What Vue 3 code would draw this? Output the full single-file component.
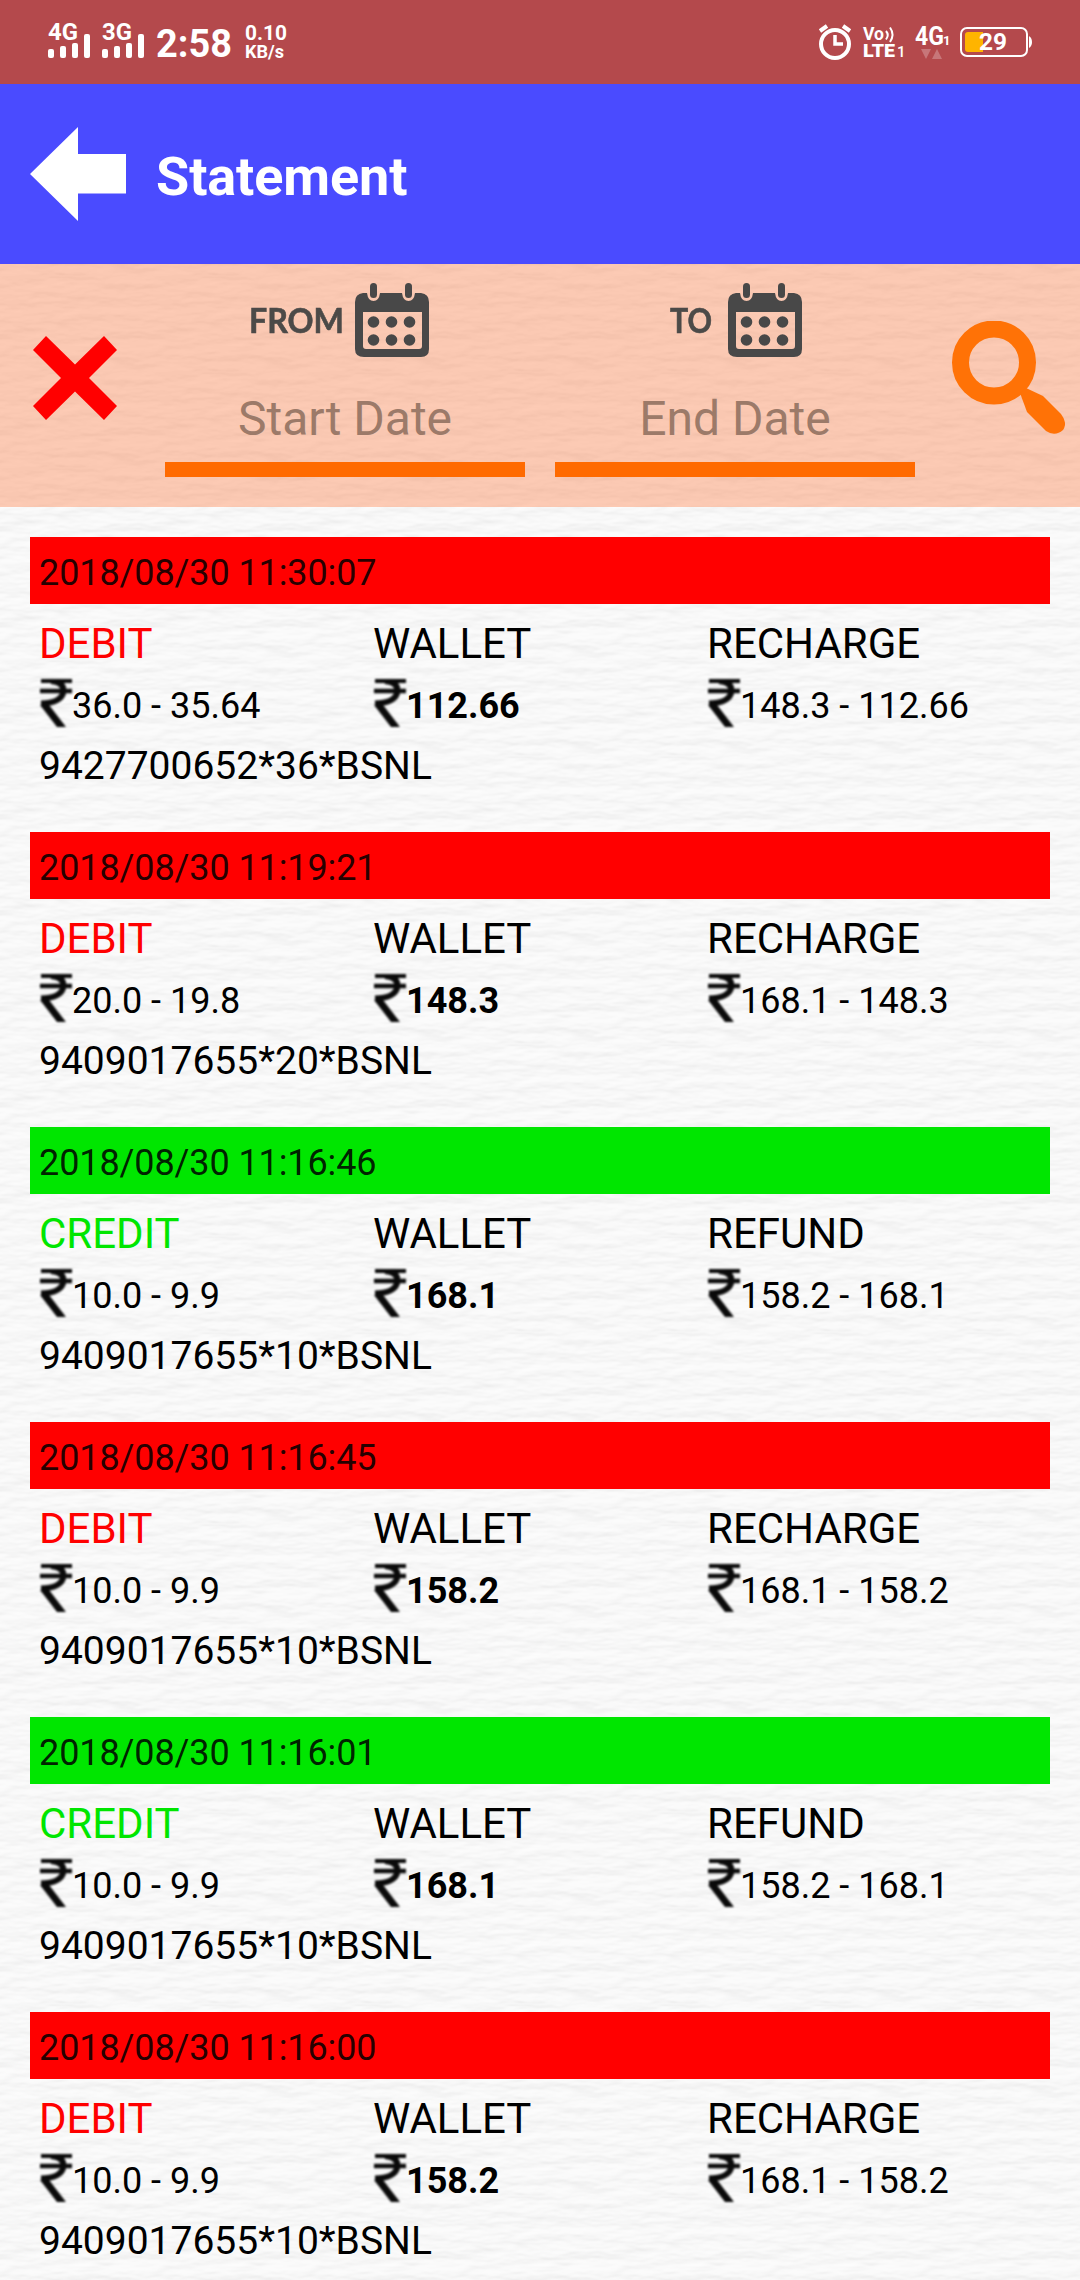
<template>
  <div class="screen">
    <!-- Paper texture -->
    <svg class="paper" width="1080" height="2280" aria-hidden="true">
      <filter id="paper-grain" filterUnits="userSpaceOnUse" x="0" y="0" width="1080" height="2280" color-interpolation-filters="sRGB">
        <feTurbulence type="fractalNoise" baseFrequency="0.026 0.085" numOctaves="3" seed="8" stitchTiles="stitch" x="0" y="84" width="153" height="96" result="noise" />
        <feDiffuseLighting in="noise" surfaceScale="2" diffuseConstant="1" lighting-color="#ffffff" x="0" y="84" width="153" height="96">
          <feDistantLight azimuth="250" elevation="60" />
        </feDiffuseLighting>
        <feColorMatrix
          type="matrix"
          values="0.14 0 0 0 0.85
                  0.14 0 0 0 0.85
                  0.14 0 0 0 0.85
                  0 0 0 1 0"
          x="0" y="84" width="153" height="96"
        />
        <feTile x="0" y="0" width="1080" height="2280" />
      </filter>
      <rect width="1080" height="2280" filter="url(#paper-grain)" />
    </svg>

    <!-- Status bar -->
    <div class="status-bar">
      <svg width="300" height="84" viewBox="0 0 300 84" fill="#fff">
        <g v-for="signal in signals" :key="signal.label" :transform="`translate(${signal.x} 0)`">
          <text x="0" y="40" font-size="24" font-weight="700" textLength="30" lengthAdjust="spacingAndGlyphs">{{ signal.label }}</text>
          <rect x="0" y="49" width="6" height="9" rx="2" />
          <rect x="12" y="46" width="6" height="12" rx="2" />
          <rect x="24" y="43" width="6" height="15" rx="2" />
          <rect x="36" y="34" width="6" height="24" rx="2" />
        </g>
        <text x="156" y="57" font-size="39" font-weight="700" textLength="76" lengthAdjust="spacingAndGlyphs">2:58</text>
        <text x="245" y="40" font-size="21" font-weight="700" textLength="42" lengthAdjust="spacingAndGlyphs">0.10</text>
        <text x="245" y="58" font-size="18" font-weight="700" textLength="39" lengthAdjust="spacingAndGlyphs">KB/s</text>
      </svg>
      <svg width="270" height="84" viewBox="810 0 270 84" fill="#fff">
        <g fill="none" stroke="#fff" stroke-width="4">
          <circle cx="835" cy="44" r="14" />
          <path d="M835 35v9h8" stroke-width="3.500" />
          <path d="M820 31l7-5M850 31l-7-5" />
        </g>
        <text x="863" y="40" font-size="18" font-weight="700" textLength="21" lengthAdjust="spacingAndGlyphs">Vo</text>
        <path d="M886 31q3.500 4 0 8.500M890 27.500q5 7 0 14.500" fill="none" stroke="#fff" stroke-width="2" />
        <text x="863" y="57" font-size="18" font-weight="900" textLength="32" lengthAdjust="spacingAndGlyphs">LTE</text>
        <text x="897" y="57" font-size="15" font-weight="500">1</text>
        <text x="915" y="45" font-size="25" font-weight="700" textLength="29" lengthAdjust="spacingAndGlyphs">4G</text>
        <text x="943" y="45" font-size="13" font-weight="700">1</text>
        <path d="M921 49h10l-5 10zM932 59h10l-5-10z" opacity="0.25" />
        <rect x="961" y="28" width="66" height="28" rx="6" fill="none" stroke="#fff" stroke-width="2" />
        <path d="M968 32h15v20h-15q-3 0-3-3v-14q0-3 3-3z" fill="#ffb400" />
        <path d="M1029 36q3 2 3 6t-3 6z" />
        <text x="979" y="50" font-size="24" font-weight="700" textLength="28" lengthAdjust="spacingAndGlyphs">29</text>
      </svg>
    </div>

    <!-- Header -->
    <header class="header">
      <button class="icon-btn" type="button" aria-label="Back">
        <svg width="96" height="96" viewBox="30 126 96 96">
          <path d="M30 174L78 127V154H126V193.500H78V221z" fill="#fff" />
        </svg>
      </button>
      <h1 class="title">Statement</h1>
    </header>

    <!-- Date filter -->
    <section class="filter">
      <button class="icon-btn clear" type="button" aria-label="Clear">
        <svg width="84" height="84" viewBox="0 0 84 84">
          <path d="M13 0L42 28.500L71 0L84 14L56 42L84 70L71 84L42 55.500L13 84L0 70L28 42L0 14z" fill="#f00" />
        </svg>
      </button>
      <div v-for="field in fields" :key="field.label" class="date-field">
        <div class="date-label" :class="field.name">
          <svg :width="field.textWidth + 8" height="52" class="date-caption">
            <text x="3" y="37" :textLength="field.textWidth" lengthAdjust="spacingAndGlyphs">{{ field.label }}</text>
          </svg>
          <svg width="74" height="76" viewBox="0 0 74 76" fill="#484848" class="soft">
            <path fill-rule="evenodd" d="M8 11H12Q13 19 18.500 19T25 11H47Q48 19 53.500 19T60 11H66Q74 12 74 20V67Q74 75 66 75H9Q0 75 0 67V20Q0 12 8 11zM8 30V64Q8 67 11 67H64Q67 67 67 64V30z" />
            <rect x="15" y="1" width="7" height="15" rx="3.500" />
            <rect x="50" y="1" width="7" height="15" rx="3.500" />
            <g v-for="cy in [40, 58]" :key="cy">
              <circle v-for="cx in [18.5, 36.5, 54.5]" :key="cx" :cx="cx" :cy="cy" r="5.800" />
            </g>
          </svg>
        </div>
        <div class="date-input">{{ field.placeholder }}</div>
      </div>
      <button class="icon-btn search" type="button" aria-label="Search">
        <svg width="114" height="114" viewBox="951 320 114 114" class="soft">
          <circle cx="994" cy="361.500" r="33.500" fill="none" stroke="#ff7206" stroke-width="17" />
          <path d="M1020 392L1026 387L1043 395L1061 413Q1068 422 1063 429Q1055 436 1046 430L1027 411z" fill="#ff7206" />
        </svg>
      </button>
    </section>

    <!-- Transactions -->
    <main class="list">
      <article v-for="item in transactions" :key="item.date" class="transaction" :class="item.type.toLowerCase()">
        <div class="date">{{ item.date }}</div>
        <div class="columns">
          <div v-for="column in columnsOf(item)" :key="column.label" class="column">
            <div class="label">{{ column.label }}</div>
            <div class="amount">
              <svg class="rupee" width="33" height="48" viewBox="0 0 33 48" fill="none" stroke="#0a0a0a">
                <path d="M2 1.500H33" stroke-width="5" />
                <path d="M1 12H33" stroke-width="4.500" />
                <path d="M12 2Q25 3 24.500 12Q23 24 2 24.500" stroke-width="6" />
                <path d="M4 24L24 50" stroke-width="7" />
              </svg>
              <span>{{ column.value }}</span>
            </div>
          </div>
        </div>
        <div class="detail">{{ item.detail }}</div>
      </article>
    </main>
  </div>
</template>

<script setup>
const signals = [
  { label: '4G', x: 48 },
  { label: '3G', x: 102 }
]

const fields = [
  { name: 'from', label: 'FROM', placeholder: 'Start Date', textWidth: 95 },
  { name: 'to', label: 'TO', placeholder: 'End Date', textWidth: 42 }
]

const transactions = [
  { date: '2018/08/30 11:30:07', type: 'DEBIT', amount: '36.0 - 35.64', wallet: '112.66', kind: 'RECHARGE', change: '148.3 - 112.66', detail: '9427700652*36*BSNL' },
  { date: '2018/08/30 11:19:21', type: 'DEBIT', amount: '20.0 - 19.8', wallet: '148.3', kind: 'RECHARGE', change: '168.1 - 148.3', detail: '9409017655*20*BSNL' },
  { date: '2018/08/30 11:16:46', type: 'CREDIT', amount: '10.0 - 9.9', wallet: '168.1', kind: 'REFUND', change: '158.2 - 168.1', detail: '9409017655*10*BSNL' },
  { date: '2018/08/30 11:16:45', type: 'DEBIT', amount: '10.0 - 9.9', wallet: '158.2', kind: 'RECHARGE', change: '168.1 - 158.2', detail: '9409017655*10*BSNL' },
  { date: '2018/08/30 11:16:01', type: 'CREDIT', amount: '10.0 - 9.9', wallet: '168.1', kind: 'REFUND', change: '158.2 - 168.1', detail: '9409017655*10*BSNL' },
  { date: '2018/08/30 11:16:00', type: 'DEBIT', amount: '10.0 - 9.9', wallet: '158.2', kind: 'RECHARGE', change: '168.1 - 158.2', detail: '9409017655*10*BSNL' }
]

const columnsOf = (item) => [
  { label: item.type, value: item.amount },
  { label: 'WALLET', value: item.wallet },
  { label: item.kind, value: item.change }
]
</script>

<style>
body {
  margin: 0;
}
</style>

<style scoped>
.screen {
  position: relative;
  width: 1080px;
  height: 2280px;
  overflow: hidden;
  background: #f7f7f7;
  font-family: Roboto, "Noto Sans", sans-serif;
  color: #000;
}

.paper {
  position: absolute;
  top: 0;
  left: 0;
}

.status-bar,
.header,
.filter,
.list {
  position: relative;
  box-sizing: border-box;
}

.status-bar {
  display: flex;
  justify-content: space-between;
  height: 84px;
  background: #b4494c;
}

/* Header */
.header {
  display: flex;
  align-items: center;
  gap: 30px;
  height: 180px;
  padding-left: 30px;
  background: #4a4bff;
}

.icon-btn {
  display: block;
  padding: 0;
  border: none;
  background: none;
}

.icon-btn svg,
.date-label svg {
  display: block;
}

.title {
  margin: 6px 0 0;
  font-size: 54px;
  line-height: 72px;
  font-weight: 700;
  letter-spacing: -0.1px;
  color: #fff;
}

/* Date filter */
.filter {
  display: flex;
  height: 243px;
  padding-left: 33px;
  background: rgba(255, 90, 15, 0.3);
}

.clear {
  margin: 0 48px 15px 0;
}

.date-field {
  width: 360px;
  margin-right: 30px;
}

.date-label {
  display: flex;
  padding-top: 18px;
}

.date-label.from {
  gap: 6px;
  padding-left: 81px;
}

.date-label.to {
  gap: 11px;
  padding-left: 112px;
}

.date-caption {
  margin-top: 14px;
  font-family: Lato, sans-serif;
  font-size: 34px;
  font-weight: 700;
  fill: #4c4a48;
  stroke: #4c4a48;
  stroke-width: 0.6px;
}

.soft,
.date-caption {
  filter: blur(0.6px);
}

.date-input {
  box-sizing: border-box;
  height: 119px;
  padding-top: 29px;
  border-bottom: 15px solid #ff6a00;
  font-size: 48px;
  line-height: 64px;
  text-align: center;
  color: #9c7a69;
}

.search {
  margin: 0 0 15px 6px;
}

/* Transactions */
.list {
  padding: 30px 30px 0;
}

.transaction {
  height: 295px;
}

.date {
  box-sizing: border-box;
  height: 67px;
  padding: 5px 9px 0;
  font-size: 36px;
  line-height: 63px;
  letter-spacing: -0.1px;
  color: rgba(0, 0, 0, 0.87);
}

.debit .date {
  background: #f00;
}

.credit .date {
  background: #00e600;
}

.columns {
  display: grid;
  grid-template-columns: repeat(3, 1fr);
  padding: 0 9px;
}

.label {
  box-sizing: border-box;
  height: 75px;
  padding-top: 12px;
  font-size: 42px;
  line-height: 56px;
}

.debit .column:first-child .label {
  color: #f00;
}

.credit .column:first-child .label {
  color: #00e600;
}

.amount {
  display: flex;
  height: 48px;
  font-size: 36px;
  line-height: 55px;
}

.column:nth-child(2) .amount {
  font-weight: 700;
}

.rupee {
  filter: blur(0.8px);
}

.detail {
  padding: 13px 9px 0;
  font-size: 39px;
  line-height: 52px;
}
</style>
